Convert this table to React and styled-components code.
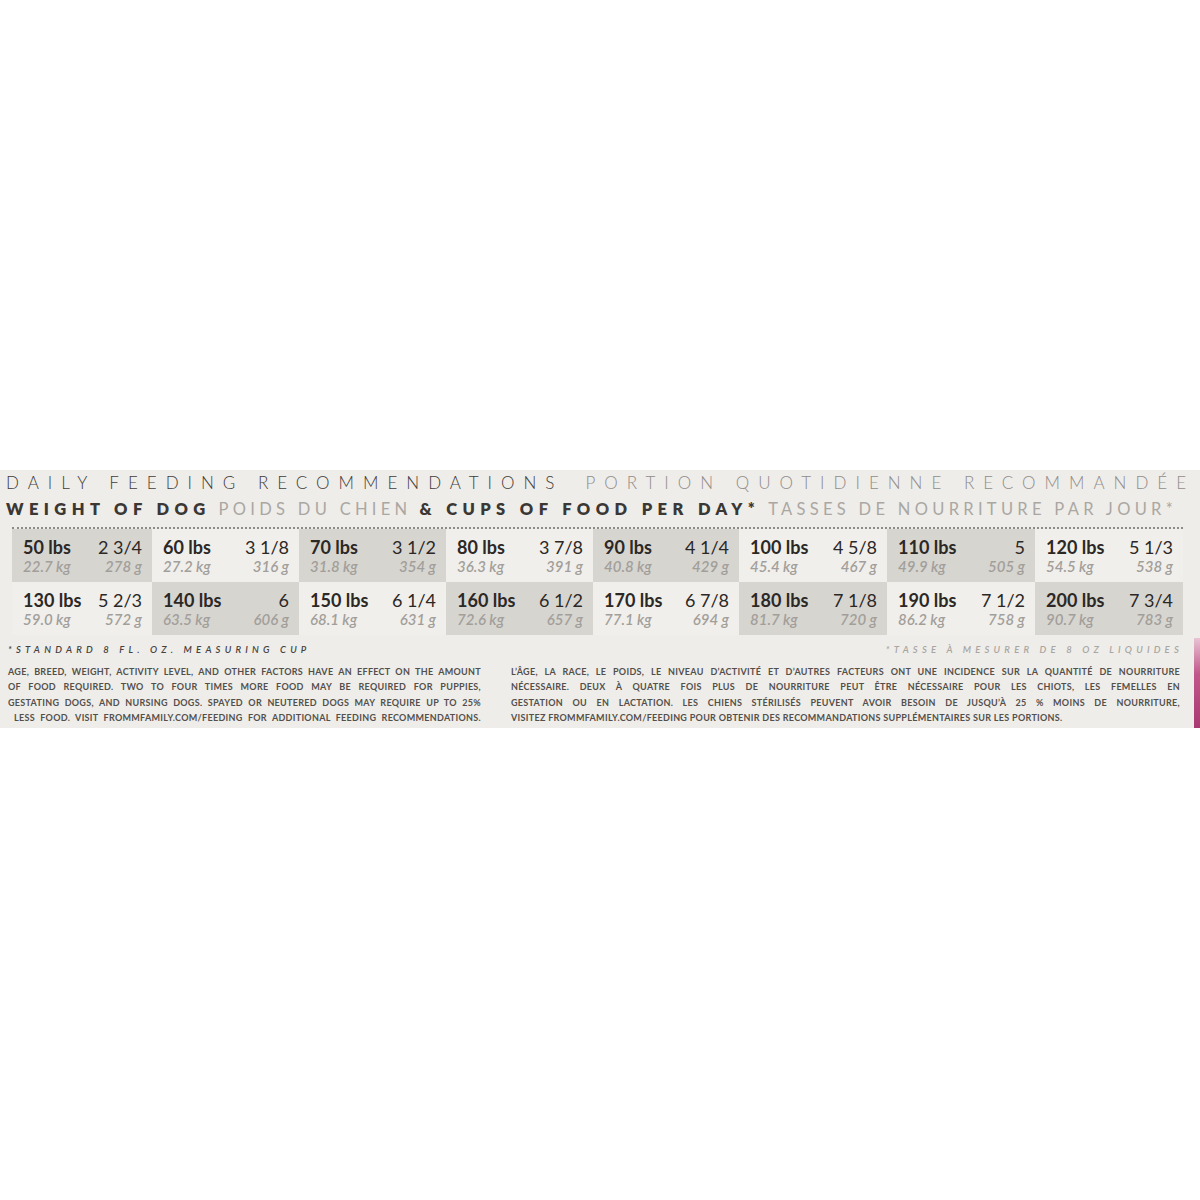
import React from "react";
import styled, { createGlobalStyle } from "styled-components";

const GlobalStyle = createGlobalStyle`
  body {
    margin: 0;
    background: #ffffff;
    font-family: Lato, "Open Sans", sans-serif;
  }
`;

const rows = [
  [
    ["50 lbs", "2 3/4", "22.7 kg", "278 g"],
    ["60 lbs", "3 1/8", "27.2 kg", "316 g"],
    ["70 lbs", "3 1/2", "31.8 kg", "354 g"],
    ["80 lbs", "3 7/8", "36.3 kg", "391 g"],
    ["90 lbs", "4 1/4", "40.8 kg", "429 g"],
    ["100 lbs", "4 5/8", "45.4 kg", "467 g"],
    ["110 lbs", "5", "49.9 kg", "505 g"],
    ["120 lbs", "5 1/3", "54.5 kg", "538 g"],
  ],
  [
    ["130 lbs", "5 2/3", "59.0 kg", "572 g"],
    ["140 lbs", "6", "63.5 kg", "606 g"],
    ["150 lbs", "6 1/4", "68.1 kg", "631 g"],
    ["160 lbs", "6 1/2", "72.6 kg", "657 g"],
    ["170 lbs", "6 7/8", "77.1 kg", "694 g"],
    ["180 lbs", "7 1/8", "81.7 kg", "720 g"],
    ["190 lbs", "7 1/2", "86.2 kg", "758 g"],
    ["200 lbs", "7 3/4", "90.7 kg", "783 g"],
  ],
];

const english = [
  "AGE, BREED, WEIGHT, ACTIVITY LEVEL, AND OTHER FACTORS HAVE AN EFFECT ON THE AMOUNT",
  "OF FOOD REQUIRED.  TWO TO FOUR TIMES MORE FOOD MAY BE REQUIRED FOR PUPPIES,",
  "GESTATING DOGS, AND NURSING DOGS. SPAYED OR NEUTERED DOGS MAY REQUIRE UP TO 25%",
  "LESS FOOD. VISIT FROMMFAMILY.COM/FEEDING FOR ADDITIONAL FEEDING RECOMMENDATIONS.",
];

const french = [
  "L’ÂGE, LA RACE, LE POIDS, LE NIVEAU D’ACTIVITÉ ET D’AUTRES FACTEURS ONT UNE INCIDENCE SUR LA QUANTITÉ DE NOURRITURE",
  "NÉCESSAIRE. DEUX À QUATRE FOIS PLUS DE NOURRITURE PEUT ÊTRE NÉCESSAIRE POUR LES CHIOTS, LES FEMELLES EN",
  "GESTATION OU EN LACTATION. LES CHIENS STÉRILISÉS PEUVENT AVOIR BESOIN DE JUSQU’À 25 % MOINS DE NOURRITURE,",
  "VISITEZ FROMMFAMILY.COM/FEEDING POUR OBTENIR DES RECOMMANDATIONS SUPPLÉMENTAIRES SUR LES PORTIONS.",
];

function App() {
  return (
    <Page>
      <GlobalStyle />
      <Panel>
        <TitleRow>
          <span>DAILY FEEDING RECOMMENDATIONS</span>
          <span className="fr">PORTION QUOTIDIENNE RECOMMANDÉE</span>
        </TitleRow>
        <HeadRow>
          <Head>WEIGHT OF DOG</Head>
          <Head $fr>POIDS DU CHIEN</Head>
          <Head>&amp; CUPS OF FOOD PER DAY*</Head>
          <Head $fr>TASSES DE NOURRITURE PAR JOUR*</Head>
        </HeadRow>
        <Dots />
        <Table>
          {rows.map((row, r) =>
            row.map(([lbs, cups, kg, g], c) => (
              <Cell key={lbs} $shaded={(r + c) % 2 === 0}>
                <Lbs>{lbs}</Lbs>
                <Cups>{cups}</Cups>
                <Metric>{kg}</Metric>
                <Metric $right>{g}</Metric>
              </Cell>
            ))
          )}
        </Table>
        <NoteRow>
          <Note>*STANDARD 8 FL. OZ. MEASURING CUP</Note>
          <Note $fr>*TASSE À MESURER DE 8 OZ LIQUIDES</Note>
        </NoteRow>
        <Columns>
          <Para $width={473}>
            {english.map((t, i) => (
              <Line key={i} $indent={i === 3 ? 6 : 0}>
                {t}
              </Line>
            ))}
          </Para>
          <Para $width={669}>
            {french.map((t, i) => (
              <Line key={i} $left={i === 3}>
                {t}
              </Line>
            ))}
          </Para>
        </Columns>
        <PinkEdge />
      </Panel>
    </Page>
  );
}

const Page = styled.div`
  height: 1200px;
  padding-top: 470px;
  box-sizing: border-box;
`;

const Panel = styled.div`
  position: relative;
  height: 258px;
  background: #efede9;
  overflow: hidden;
`;

const TitleRow = styled.div`
  display: flex;
  gap: 22px;
  padding: 3px 0 0 6px;
  height: 20px;
  line-height: 20px;
  font-size: 17px;
  font-weight: 300;
  letter-spacing: 9px;
  color: #3f3c3a;
  white-space: nowrap;

  .fr {
    color: #8f8c89;
  }
`;

const HeadRow = styled.div`
  display: flex;
  gap: 8px;
  margin-top: 6px;
  padding-left: 6px;
  height: 20px;
  line-height: 20px;
  white-space: nowrap;
`;

const Head = styled.span`
  font-size: 16.5px;
  font-weight: ${(p) => (p.$fr ? 400 : 800)};
  letter-spacing: ${(p) => (p.$fr ? "4.3px" : "5.4px")};
  color: ${(p) => (p.$fr ? "#aaa7a3" : "#3a3735")};
`;

const Dots = styled.div`
  margin: 8px 17px 0 12px;
  border-top: 2px dotted #8d8a87;
`;

const Table = styled.div`
  display: grid;
  grid-template-columns: 140px 147px 147px 147px 146px 148px 148px 1fr;
  grid-auto-rows: 53px;
  margin: 0 17px 0 12px;
`;

const Cell = styled.div`
  display: grid;
  grid-template-columns: 1fr auto;
  grid-template-rows: 22px 17px;
  align-content: start;
  padding: 7px 10px 0 11px;
  background: ${(p) => (p.$shaded ? "#d7d5d0" : "#f1efeb")};
  white-space: nowrap;
`;

const Lbs = styled.span`
  font-size: 18px;
  font-weight: 700;
  line-height: 22px;
  color: #2b2826;
`;

const Cups = styled.span`
  font-size: 18px;
  font-weight: 400;
  line-height: 22px;
  color: #2b2826;
  text-align: right;
`;

const Metric = styled.span`
  font-size: 15px;
  font-style: italic;
  font-weight: 600;
  line-height: 17px;
  color: #a29f9b;
  text-align: ${(p) => (p.$right ? "right" : "left")};
`;

const NoteRow = styled.div`
  display: flex;
  justify-content: space-between;
  margin-top: 8px;
  padding: 0 17px 0 8px;
  height: 14px;
  line-height: 14px;
  white-space: nowrap;
`;

const Note = styled.span`
  font-size: 9.5px;
  font-style: italic;
  font-weight: 600;
  letter-spacing: 4.2px;
  color: ${(p) => (p.$fr ? "#a9a6a2" : "#46433f")};
`;

const Columns = styled.div`
  display: flex;
  gap: 30px;
  margin-top: 7px;
  padding-left: 8px;
`;

const Para = styled.div`
  width: ${(p) => p.$width}px;
  font-size: 9px;
  font-weight: 700;
  letter-spacing: 0.3px;
  color: #53504c;
`;

const Line = styled.div`
  height: 15.3px;
  line-height: 15.3px;
  white-space: nowrap;
  padding-left: ${(p) => p.$indent}px;
  text-align: ${(p) => (p.$left ? "left" : "justify")};
  text-align-last: ${(p) => (p.$left ? "left" : "justify")};
`;

const PinkEdge = styled.div`
  position: absolute;
  right: 0;
  bottom: 0;
  width: 6px;
  height: 90px;
  background: linear-gradient(to bottom, #e9c3d3, #c0578a 40%, #a83a72);
`;

export default App;
